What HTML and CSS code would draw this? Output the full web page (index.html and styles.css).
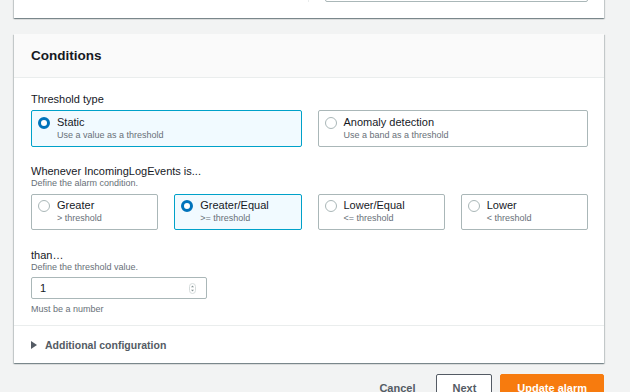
FILE: index.html
```html
<!DOCTYPE html>
<html lang="en">
<head>
<meta charset="utf-8">
<title>Conditions</title>
<link rel="stylesheet" href="styles.css">
</head>
<body>
<div class="page">
  <section class="card card-top">
    <div class="top-grid">
      <div class="top-col top-col-left"></div>
      <div class="top-col"><div class="top-input"></div></div>
    </div>
  </section>

  <section class="card">
    <header class="card-header"><h2>Conditions</h2></header>
    <div class="card-body">
      <div class="field field-first">
        <div class="field-label">Threshold type</div>
        <div class="tiles tiles-2">
          <label class="tile selected"><span class="radio on"></span><span class="tile-text"><span class="tile-title">Static</span><span class="tile-desc">Use a value as a threshold</span></span></label>
          <label class="tile"><span class="radio"></span><span class="tile-text"><span class="tile-title">Anomaly detection</span><span class="tile-desc">Use a band as a threshold</span></span></label>
        </div>
      </div>

      <div class="field field-second">
        <div class="field-label">Whenever IncomingLogEvents is...</div>
        <div class="field-desc">Define the alarm condition.</div>
        <div class="tiles tiles-4">
          <label class="tile"><span class="radio"></span><span class="tile-text"><span class="tile-title">Greater</span><span class="tile-desc">&gt; threshold</span></span></label>
          <label class="tile selected"><span class="radio on"></span><span class="tile-text"><span class="tile-title">Greater/Equal</span><span class="tile-desc">&gt;= threshold</span></span></label>
          <label class="tile"><span class="radio"></span><span class="tile-text"><span class="tile-title">Lower/Equal</span><span class="tile-desc">&lt;= threshold</span></span></label>
          <label class="tile"><span class="radio"></span><span class="tile-text"><span class="tile-title">Lower</span><span class="tile-desc">&lt; threshold</span></span></label>
        </div>
      </div>

      <div class="field field-third">
        <div class="field-label">than…</div>
        <div class="field-desc">Define the threshold value.</div>
        <div class="number-input">
          <span class="number-value">1</span>
          <svg class="spinner" width="7" height="11" viewBox="0 0 7 11"><rect x="0.5" y="0.5" width="6" height="10" rx="3" fill="none" stroke="#d5dbdb"/><path d="M2 4.2 L3.5 2.6 L5 4.2 Z M2 6.8 L3.5 8.4 L5 6.8 Z" fill="#879596"/></svg>
        </div>
        <div class="field-hint">Must be a number</div>
      </div>
    </div>
    <div class="card-footer">
      <span class="caret"></span>
      <span class="footer-title">Additional configuration</span>
    </div>
  </section>

  <div class="actions">
    <button class="btn btn-link">Cancel</button>
    <button class="btn btn-normal">Next</button>
    <button class="btn btn-primary">Update alarm</button>
  </div>
</div>
</body>
</html>
```

FILE: styles.css
```css
* { box-sizing: border-box; }
html, body {
  margin: 0;
  padding: 0;
  background: #f2f3f3;
  font-family: "Liberation Sans", Arial, sans-serif;
  color: #16191f;
  overflow: hidden;
}
.page {
  margin: 0 26px 0 14px;
}
.card {
  background: #fff;
  box-shadow: 0 1px 1px 0 rgba(0, 28, 36, 0.3), 1px 1px 1px 0 rgba(0, 28, 36, 0.15), -1px 1px 1px 0 rgba(0, 28, 36, 0.15);
}
.card-top {
  margin-top: -24px;
  padding: 0 16px 16px 17px;
}
.top-grid {
  display: grid;
  grid-template-columns: 278px 1fr;
  column-gap: 16px;
  height: 26px;
}
.top-col-left {
  border-right: 1px solid #eaeded;
}
.top-input {
  height: 100%;
  border: 1px solid #aab7b8;
  border-radius: 2px;
}
.card-top + .card {
  margin-top: 16px;
}
.card-header {
  height: 44px;
  background: #fafafa;
  border-bottom: 1px solid #eaeded;
  display: flex;
  align-items: center;
  padding: 0 17px;
}
.card-header h2 {
  margin: 0;
  font-size: 13.5px;
  font-weight: 700;
  line-height: 16px;
  padding-top: 1px;
}
.card-body {
  padding: 15px 16px 10px 17px;
}
.field-label {
  font-size: 11px;
  line-height: 12px;
}
.field-desc {
  font-size: 9px;
  line-height: 12px;
  color: #687078;
}
.field-first .field-label { margin-bottom: 5px; }
.field-second { margin-top: 18px; }
.field-second .field-desc { margin-bottom: 5px; }
.field-third { margin-top: 19px; }
.field-third .field-desc { margin-bottom: 4px; }
.tiles {
  display: grid;
  gap: 16px;
}
.tiles-2 { grid-template-columns: 1fr 1fr; }
.tiles-4 { grid-template-columns: repeat(4, 1fr); }
.tile {
  display: flex;
  align-items: flex-start;
  gap: 7px;
  border: 1px solid #aab7b8;
  border-radius: 2px;
  padding: 4px 8px 5px 6px;
  background: #fff;
  height: 36px;
}
.tiles-2 .tile { height: 37px; padding-top: 5px; }
.tile.selected {
  border-color: #00a1c9;
  background: #f1faff;
}
.radio {
  flex: none;
  width: 12px;
  height: 12px;
  margin-top: 1px;
  border-radius: 50%;
  border: 1px solid #aab7b8;
  background: #fff;
}
.radio.on {
  border: 3.5px solid #0073bb;
}
.tile-text {
  display: flex;
  flex-direction: column;
}
.tile-title {
  font-size: 11px;
  line-height: 13px;
}
.tile-desc {
  font-size: 9px;
  line-height: 12px;
  color: #687078;
}
.number-input {
  width: 176px;
  height: 22px;
  border: 1px solid #aab7b8;
  border-radius: 2px;
  display: flex;
  align-items: center;
  justify-content: space-between;
  padding: 0 10px 0 8px;
}
.number-value {
  font-size: 11px;
}
.spinner { display: block; }
.field-hint {
  margin-top: 4px;
  font-size: 9px;
  line-height: 12px;
  color: #687078;
}
.card-footer {
  border-top: 1px solid #eaeded;
  height: 38px;
  display: flex;
  align-items: center;
  gap: 8px;
  padding: 0 17px;
}
.caret {
  width: 0;
  height: 0;
  border-top: 4px solid transparent;
  border-bottom: 4px solid transparent;
  border-left: 6px solid #545b64;
}
.footer-title {
  font-size: 10.5px;
  font-weight: 700;
  color: #545b64;
}
.actions {
  margin-top: 11px;
  display: flex;
  justify-content: flex-end;
  align-items: flex-start;
  gap: 8px;
}
.btn {
  font-family: "Liberation Sans", Arial, sans-serif;
  font-size: 11px;
  font-weight: 700;
  line-height: 13px;
  height: 24px;
  border-radius: 2px;
  padding: 4px 15px 0;
  border: 1px solid transparent;
  background: transparent;
}
.btn-link {
  color: #545b64;
  padding-left: 12px;
  padding-right: 12px;
}
.btn-normal {
  color: #545b64;
  background: #fff;
  border-color: #545b64;
}
.btn-primary {
  color: #fff;
  background: #f77b0e;
  border-color: #f77b0e;
  padding-left: 16px;
  padding-right: 16px;
}
```
